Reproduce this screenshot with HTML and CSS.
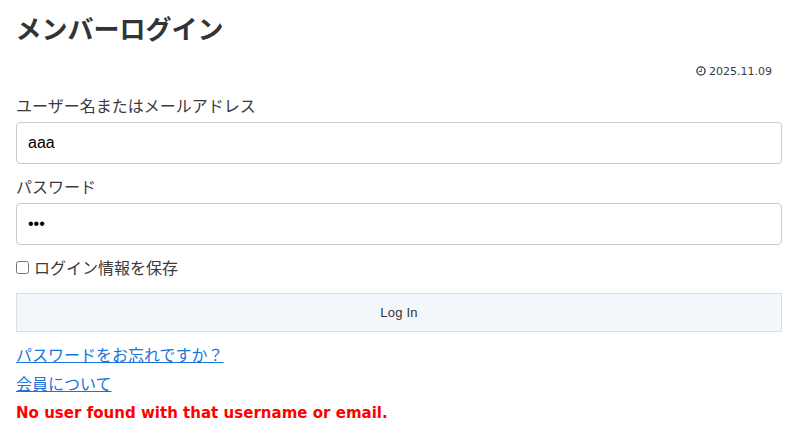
FILE: index.html
```html
<!DOCTYPE html>
<html lang="ja">
<head>
<meta charset="utf-8">
<title>メンバーログイン</title>
<link rel="stylesheet" href="styles.css">
</head>
<body>
<main class="page">
  <h1 class="title">メンバーログイン</h1>
  <div class="meta">
    <svg class="clock" viewBox="0 0 12 12" width="10" height="10" aria-hidden="true"><circle cx="6" cy="6" r="4.9" fill="none" stroke="#333" stroke-width="1.6"/><path d="M6.4 3V6.5H3.4" fill="none" stroke="#333" stroke-width="1.1"/></svg>
    <span>2025.11.09</span>
  </div>
  <form class="form">
    <label class="field">
      <span class="label">ユーザー名またはメールアドレス</span>
      <input class="input" type="text" value="aaa">
    </label>
    <label class="field">
      <span class="label">パスワード</span>
      <input class="input" type="password" value="aaa">
    </label>
    <label class="remember">
      <input class="check" type="checkbox">
      <span>ログイン情報を保存</span>
    </label>
    <button class="submit" type="button">Log In</button>
  </form>
  <p class="link-row"><a href="#">パスワードをお忘れですか？</a></p>
  <p class="link-row"><a href="#">会員について</a></p>
  <p class="error">No user found with that username or email.</p>
</main>
</body>
</html>
```

FILE: styles.css
```css
* { box-sizing: border-box; }
html, body { margin: 0; padding: 0; background: #fff; }
body {
  color: #3a3a3a;
  font-family: "Noto Sans CJK JP", "Noto Sans", sans-serif;
  font-size: 16px;
  overflow: hidden;
}
.page { padding: 8px 9px 0 16px; }
.title {
  margin: 0 0 0 -0.5px;
  color: #333;
  font-size: 26px;
  line-height: 40px;
  font-weight: 700;
}
.meta {
  display: flex;
  justify-content: flex-end;
  align-items: center;
  gap: 3px;
  height: 16px;
  margin-top: 15px;
  padding-right: 10px;
  font-family: "DejaVu Sans", sans-serif;
  font-size: 11px;
}
.form { display: flex; flex-direction: column; }
.field { display: flex; flex-direction: column; margin-bottom: 10px; }
.field:first-child { margin-top: 14px; }
.label { line-height: 24px; height: 29px; }
.input {
  height: 42px;
  padding: 0 11px;
  border: 1px solid #ccc;
  border-radius: 4px;
  background: #fff;
  color: #000;
  font-family: "Liberation Sans", sans-serif;
  font-size: 16px;
}
.remember {
  display: flex;
  align-items: center;
  gap: 5px;
  height: 24px;
  line-height: 24px;
}
.check { width: 13px; height: 13px; margin: 0; }
.submit {
  height: 39px;
  margin-top: 14px;
  border: 1px solid #ddd;
  background: #f3f7fb;
  color: #333;
  font-family: "Liberation Sans", sans-serif;
  font-size: 13px;
  letter-spacing: 0.2px;
}
.link-row { margin: 0; line-height: 24px; margin-top: 5px; }
.link-row:first-of-type { margin-top: 10px; }
.link-row a { color: #1a73d9; text-decoration: underline; }
.error {
  margin: 6px 0 0;
  color: #f00;
  font-family: "DejaVu Sans", sans-serif;
  font-size: 15px;
  line-height: 24px;
  font-weight: 700;
  letter-spacing: 0.02px;
}
```
